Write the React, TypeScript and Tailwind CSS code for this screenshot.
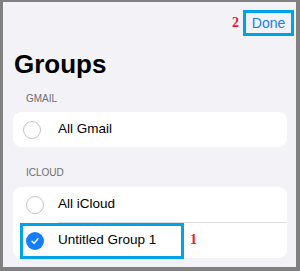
import React from "react";

const font = { fontFamily: '"Liberation Sans", Arial, sans-serif' };
const serif = { fontFamily: '"Liberation Serif", "Times New Roman", serif' };

function Radio({ checked }: { checked?: boolean }) {
  if (checked) {
    return (
      <div className="w-[18px] h-[18px] rounded-full bg-[#157efb] flex items-center justify-center shrink-0">
        <svg width="10" height="10" viewBox="0 0 10 10">
          <path d="M2 5.2 L4.1 7.2 L8 2.8" fill="none" stroke="#fff" strokeWidth="1.4" strokeLinecap="round" strokeLinejoin="round" />
        </svg>
      </div>
    );
  }
  return <div className="w-[18px] h-[18px] rounded-full border border-[#c4c4c8] shrink-0" />;
}

export default function App() {
  return (
    <div className="w-[300px] h-[271px] bg-[#808080] pt-[2px] pl-[3px] pr-[4px] pb-[4px]" style={font}>
      <div className="w-full h-full bg-[#f2f2f7] flex flex-col">
        <div className="pt-[8px] pr-[2px] flex justify-end items-center gap-[4px]">
          <span className="text-[14px] leading-[14px] font-bold text-[#f01434]" style={serif}>2</span>
          <div className="w-[51px] h-[26px] border-[3px] border-[#00a2e8] flex items-center justify-center text-[14px] text-[#157efb]">
            Done
          </div>
        </div>
        <div className="mt-[15px] pl-[11px] text-[26px] leading-[26px] font-bold text-black">Groups</div>
        <div className="mt-[16px] pl-[23px] text-[10px] leading-[12px] text-[#6d6d72]">GMAIL</div>
        <div className="mt-[7px] ml-[10px] mr-[9px] h-[35px] bg-white rounded-[8px] flex items-center pl-[10px]">
          <Radio />
          <span className="ml-[17px] text-[13.5px] text-black">All Gmail</span>
        </div>
        <div className="mt-[20px] pl-[23px] text-[10px] leading-[12px] text-[#6d6d72]">ICLOUD</div>
        <div className="mt-[8px] ml-[10px] mr-[9px] bg-white rounded-[8px] flex flex-col">
          <div className="h-[35px] flex items-center pl-[13px]">
            <Radio />
            <span className="ml-[14px] text-[13.5px] text-black">All iCloud</span>
          </div>
          <div className="ml-[45px] h-[1px] bg-[#dcdcdc]" />
          <div className="relative h-[35px] flex items-center pl-[13px]">
            <Radio checked />
            <span className="ml-[14px] text-[13.5px] text-black">Untitled Group 1</span>
            <div className="absolute left-[7px] top-0 w-[164px] h-[36px] border-[3px] border-[#00a2e8]" />
            <span className="absolute left-[177px] top-[10px] text-[14px] leading-[14px] font-bold text-[#f01434]" style={serif}>1</span>
          </div>
        </div>
      </div>
    </div>
  );
}
